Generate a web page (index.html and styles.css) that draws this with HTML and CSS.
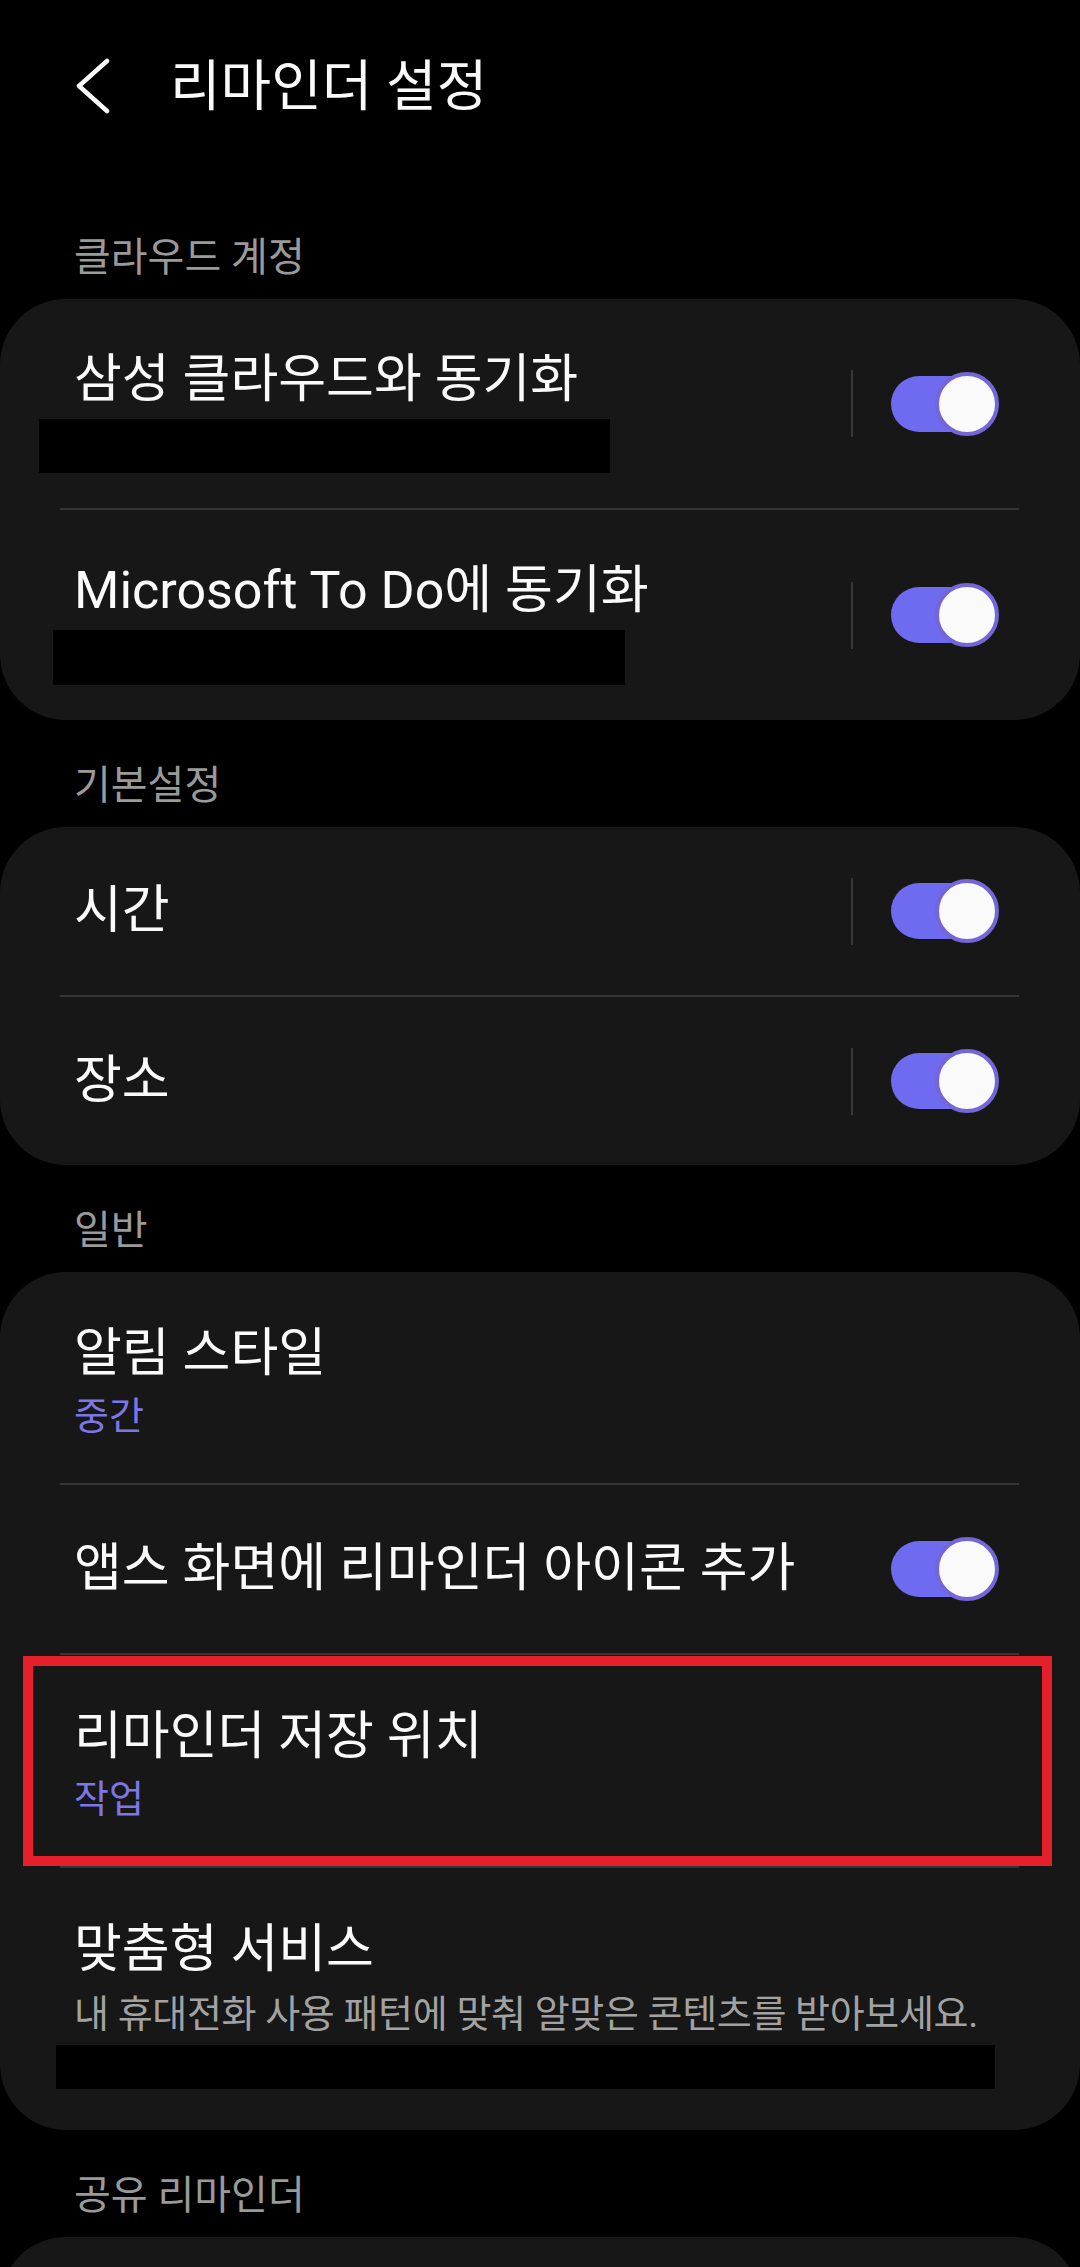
FILE: index.html
```html
<!DOCTYPE html>
<html lang="ko">
<head>
<meta charset="UTF-8" />
<title>리마인더 설정</title>
<meta name="viewport" content="width=device-width, initial-scale=1" />
<link rel="stylesheet" href="styles.css">
</head>
<body>
<div class="screen">

  <div class="appbar">
    <svg class="back" width="34" height="56" viewBox="0 0 34 56">
      <polyline points="31,3 3,28 31,53" fill="none" stroke="#fafafa" stroke-width="4.5" stroke-linecap="round" stroke-linejoin="round"/>
    </svg>
    <h1>리마인더 설정</h1>
  </div>

  <div class="label">클라우드 계정</div>
  <div class="card">
    <div class="row">
      <div class="text sub">
        <div class="title">삼성 클라우드와 동기화</div>
        <div class="redact r1"></div>
      </div>
      <div class="vline"></div>
      <div class="toggle"><span class="track"></span><span class="thumb"></span></div>
    </div>
    <div class="divider"></div>
    <div class="row">
      <div class="text sub">
        <div class="title">Microsoft To Do에 동기화</div>
        <div class="redact r2"></div>
      </div>
      <div class="vline"></div>
      <div class="toggle"><span class="track"></span><span class="thumb"></span></div>
    </div>
  </div>

  <div class="label">기본설정</div>
  <div class="card">
    <div class="row single">
      <div class="text"><div class="title">시간</div></div>
      <div class="vline"></div>
      <div class="toggle"><span class="track"></span><span class="thumb"></span></div>
    </div>
    <div class="divider"></div>
    <div class="row single">
      <div class="text"><div class="title">장소</div></div>
      <div class="vline"></div>
      <div class="toggle"><span class="track"></span><span class="thumb"></span></div>
    </div>
  </div>

  <div class="label">일반</div>
  <div class="card">
    <div class="row">
      <div class="text with-value">
        <div class="title">알림 스타일</div>
        <div class="value">중간</div>
      </div>
    </div>
    <div class="divider"></div>
    <div class="row single">
      <div class="text"><div class="title">앱스 화면에 리마인더 아이콘 추가</div></div>
      <div class="toggle"><span class="track"></span><span class="thumb"></span></div>
    </div>
    <div class="divider"></div>
    <div class="row">
      <div class="text with-value">
        <div class="title">리마인더 저장 위치</div>
        <div class="value">작업</div>
      </div>
      <div class="highlight"></div>
    </div>
    <div class="divider"></div>
    <div class="row">
      <div class="text with-desc">
        <div class="title">맞춤형 서비스</div>
        <div class="desc">내 휴대전화 사용 패턴에 맞춰 알맞은 콘텐츠를 받아보세요.</div>
        <div class="redact r3"></div>
      </div>
    </div>
  </div>

  <div class="label">공유 리마인더</div>
  <div class="card peek"></div>

</div>
</body>
</html>
```

FILE: styles.css
```css
body { margin:0; background:#000; font-family: Roboto, "Noto Sans CJK KR", sans-serif; color:#fafafa; }
.screen { width:1080px; height:2267px; overflow:hidden; }

.appbar { height:192px; box-sizing:border-box; padding:56px 0 0 76px; display:flex; align-items:flex-start; }
.back { margin-top:2px; flex:none; }
.appbar h1 { margin:0 0 0 60px; font-size:55px; font-weight:400; line-height:60px; }

.label { padding:41px 74px 16px; font-size:40px; line-height:50px; color:#9a9a9a; }

.card { background:#171717; border-radius:66px; }
.card.peek { height:168px; }
.divider { height:2px; background:#353535; margin:0 61px 0 60px; }

.row { position:relative; display:flex; align-items:center; padding:0 81px 0 74px; }
.text { flex:1; min-width:0; }
.title { font-size:52px; line-height:60px; white-space:nowrap; }

.single { min-height:168px; }
.sub { padding:51px 0 35px; }
.with-value { padding:52px 0 45px; }
.with-desc { padding:52px 0 41px; }

.value { margin-top:10px; font-size:38px; line-height:44px; color:#7d76e6; }
.desc { margin-top:12px; font-size:38px; letter-spacing:-0.35px; line-height:44px; color:#a2a2a2; white-space:nowrap; }

.redact { background:#000; margin-top:9px; }
.r1 { margin-left:-35px; width:571px; height:54px; }
.r2 { margin-left:-21px; width:572px; height:55px; }
.r3 { margin-left:-18px; width:939px; height:44px; }

.vline { width:2px; height:67px; background:#383838; margin-right:38px; flex:none; }

.toggle { position:relative; width:108px; height:64px; flex:none; }
.track { position:absolute; left:0; top:4px; width:96px; height:56px; border-radius:28px; background:#6f6bf0; }
.thumb { position:absolute; right:0; top:0; width:56px; height:56px; border-radius:50%; background:#fafafa; border:4px solid #7466d8; }

.highlight { position:absolute; top:1px; bottom:0; left:23px; right:28px; border:10px solid #e6202a; }
```
